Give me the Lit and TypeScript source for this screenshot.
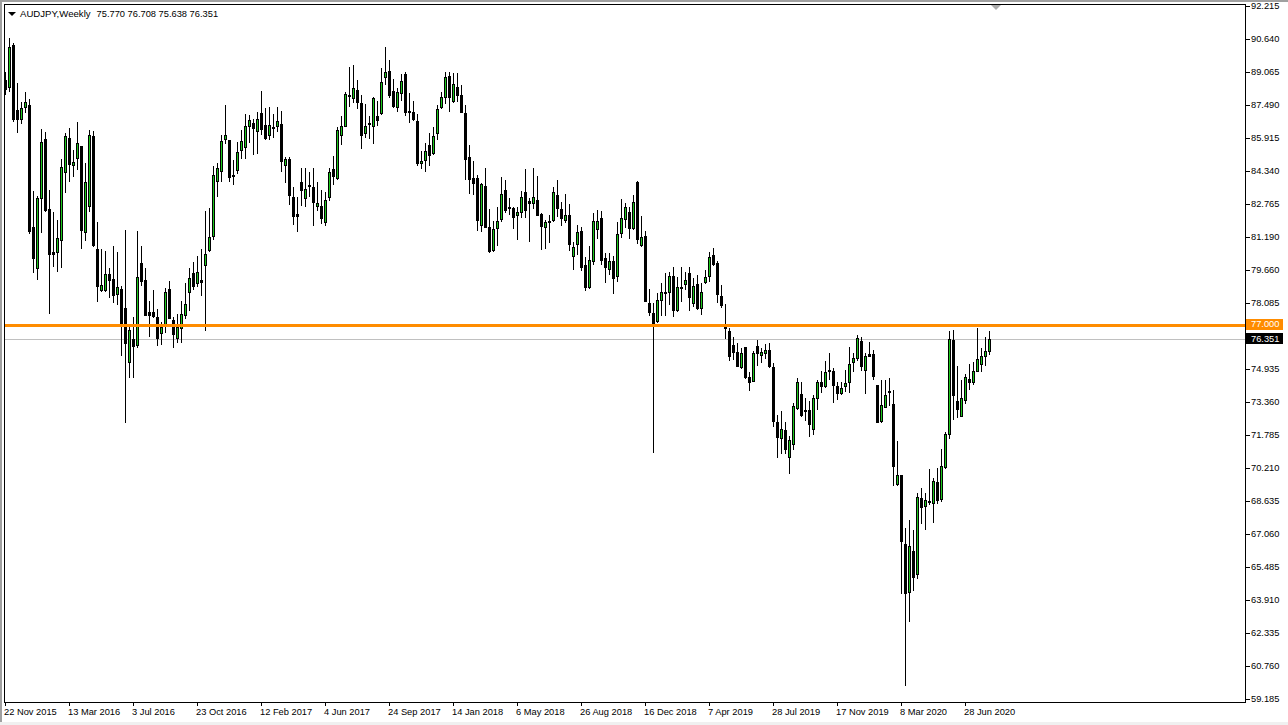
import { LitElement, html, svg, css, type TemplateResult } from 'lit';
import { customElement } from 'lit/decorators.js';

// [high, low, bodyTop, bodyBottom, bull] in chart pixels, one bar every 4px from x=5
type Bar = [number, number, number, number, number];

const BARS: Bar[] = [
  [72, 95, 80, 90, 0], [38, 92, 47, 88, 1], [43, 122, 45, 120, 0], [83, 133, 110, 120, 0],
  [102, 124, 108, 120, 1], [92, 113, 102, 108, 1], [99, 234, 105, 232, 0], [191, 273, 227, 259, 0],
  [196, 280, 198, 269, 1], [129, 233, 142, 199, 1], [132, 212, 139, 211, 0], [190, 314, 209, 255, 0],
  [212, 267, 252, 255, 0], [220, 272, 238, 253, 1], [159, 268, 167, 241, 1], [133, 193, 136, 173, 1],
  [128, 182, 138, 165, 0], [150, 177, 162, 166, 1], [122, 170, 143, 159, 1], [159, 249, 146, 231, 0],
  [163, 241, 182, 233, 1], [130, 212, 135, 207, 1], [131, 247, 136, 246, 0], [222, 302, 249, 287, 0],
  [249, 292, 285, 291, 1], [251, 292, 274, 291, 1], [268, 298, 274, 281, 0], [246, 303, 279, 296, 0],
  [252, 305, 287, 295, 1], [286, 356, 289, 327, 0], [230, 423, 308, 344, 0], [327, 378, 330, 363, 1],
  [317, 378, 339, 347, 0], [231, 348, 277, 346, 1], [246, 286, 263, 282, 0], [268, 316, 280, 316, 0],
  [301, 337, 312, 316, 0], [290, 318, 312, 317, 0], [309, 346, 317, 339, 0], [322, 345, 327, 334, 1],
  [288, 333, 292, 325, 1], [281, 319, 289, 319, 0], [317, 348, 320, 335, 0], [314, 343, 327, 339, 1],
  [301, 343, 314, 329, 1], [283, 319, 304, 316, 1], [268, 311, 278, 293, 1], [262, 290, 273, 287, 0],
  [256, 287, 272, 284, 1], [249, 296, 280, 283, 0], [211, 331, 254, 266, 1], [208, 252, 237, 251, 1],
  [166, 240, 175, 237, 1], [163, 197, 168, 182, 1], [135, 182, 141, 172, 1], [105, 144, 135, 140, 1],
  [140, 182, 140, 178, 0], [160, 185, 175, 177, 0], [142, 174, 152, 171, 1], [130, 159, 141, 151, 1],
  [114, 159, 126, 148, 1], [115, 143, 120, 127, 1], [119, 155, 123, 129, 0], [112, 154, 119, 132, 1],
  [91, 135, 113, 130, 0], [108, 140, 125, 139, 0], [107, 140, 125, 136, 1], [114, 138, 127, 129, 0],
  [107, 132, 121, 127, 1], [111, 172, 124, 162, 0], [157, 183, 159, 166, 1], [157, 205, 159, 196, 0],
  [187, 225, 197, 217, 0], [197, 232, 214, 217, 0], [168, 206, 182, 191, 0], [168, 207, 189, 199, 1],
  [172, 197, 185, 187, 0], [168, 226, 187, 203, 0], [182, 211, 203, 207, 1], [190, 224, 206, 219, 0],
  [192, 226, 200, 223, 1], [168, 201, 172, 198, 1], [156, 185, 169, 177, 0], [127, 180, 130, 179, 1],
  [116, 145, 126, 136, 1], [92, 127, 94, 127, 1], [67, 107, 95, 97, 0], [65, 103, 88, 99, 1],
  [80, 109, 90, 103, 0], [95, 149, 103, 136, 0], [104, 138, 126, 134, 1], [116, 139, 123, 124, 0],
  [97, 144, 98, 127, 1], [101, 126, 116, 121, 0], [68, 115, 82, 114, 1], [47, 85, 72, 78, 1],
  [60, 98, 71, 96, 0], [79, 108, 91, 107, 0], [88, 112, 92, 108, 1], [74, 101, 81, 94, 1],
  [72, 116, 74, 113, 0], [93, 123, 111, 112, 0], [101, 121, 112, 120, 0], [114, 166, 121, 164, 0],
  [151, 169, 161, 164, 1], [143, 172, 151, 161, 1], [133, 166, 145, 156, 0], [127, 155, 136, 154, 1],
  [105, 140, 109, 134, 1], [92, 109, 97, 108, 1], [72, 104, 77, 98, 1], [72, 112, 76, 98, 0],
  [73, 103, 84, 102, 1], [73, 102, 87, 96, 0], [85, 113, 95, 113, 0], [105, 180, 113, 160, 0],
  [145, 194, 157, 180, 0], [161, 195, 178, 184, 0], [175, 231, 178, 221, 0], [183, 232, 184, 226, 1],
  [168, 228, 186, 228, 0], [209, 253, 227, 252, 0], [221, 252, 229, 251, 1], [207, 246, 221, 229, 1],
  [177, 222, 194, 220, 1], [180, 213, 190, 211, 0], [198, 215, 207, 209, 0], [207, 229, 208, 218, 0],
  [207, 240, 212, 216, 1], [191, 218, 197, 213, 1], [169, 218, 192, 211, 0], [198, 242, 201, 204, 0],
  [168, 209, 197, 204, 1], [176, 216, 200, 216, 0], [213, 250, 214, 227, 0], [220, 249, 222, 228, 1],
  [215, 243, 221, 223, 0], [187, 222, 192, 221, 1], [180, 217, 195, 209, 0], [202, 226, 209, 219, 0],
  [194, 223, 215, 221, 1], [204, 251, 215, 245, 0], [242, 270, 247, 257, 1], [225, 255, 232, 245, 1],
  [227, 271, 231, 268, 0], [257, 291, 265, 288, 0], [246, 289, 260, 288, 1], [213, 265, 221, 262, 1],
  [210, 239, 221, 230, 1], [211, 265, 218, 261, 0], [253, 283, 258, 268, 0], [253, 275, 261, 270, 1],
  [256, 294, 261, 279, 0], [222, 282, 234, 277, 1], [199, 238, 218, 234, 1], [203, 228, 207, 220, 1],
  [207, 239, 212, 229, 0], [195, 230, 202, 229, 1], [181, 244, 182, 240, 0], [216, 247, 237, 246, 1],
  [231, 302, 236, 302, 0], [289, 316, 303, 313, 0], [303, 453, 313, 324, 0], [293, 323, 300, 322, 1],
  [283, 316, 292, 301, 1], [273, 316, 292, 293, 0], [272, 305, 276, 293, 1], [267, 317, 276, 311, 0],
  [277, 312, 287, 311, 1], [267, 302, 287, 289, 0], [272, 290, 280, 285, 1], [267, 311, 273, 298, 0],
  [278, 307, 286, 304, 1], [275, 310, 284, 309, 0], [283, 315, 292, 309, 1], [270, 284, 277, 283, 1],
  [252, 282, 257, 277, 1], [248, 266, 255, 265, 0], [261, 303, 263, 295, 0], [285, 308, 296, 306, 0],
  [304, 339, 327, 329, 0], [328, 361, 331, 357, 0], [337, 360, 345, 353, 0], [343, 367, 352, 367, 0],
  [348, 369, 353, 368, 1], [347, 379, 347, 378, 0], [372, 391, 377, 383, 0], [351, 382, 353, 382, 1],
  [340, 366, 346, 354, 0], [348, 363, 352, 356, 1], [344, 359, 350, 354, 1], [343, 368, 350, 367, 0],
  [363, 427, 367, 422, 0], [415, 458, 422, 438, 0], [411, 454, 429, 439, 1], [422, 454, 430, 450, 0],
  [436, 474, 440, 458, 1], [403, 450, 406, 445, 1], [378, 410, 382, 409, 1], [382, 417, 394, 416, 0],
  [398, 421, 410, 412, 0], [401, 437, 410, 425, 0], [395, 435, 398, 430, 1], [380, 410, 382, 399, 1],
  [371, 393, 382, 387, 0], [361, 388, 372, 387, 1], [353, 380, 370, 372, 0], [368, 403, 371, 386, 0],
  [382, 400, 386, 394, 0], [382, 395, 388, 394, 1], [370, 392, 383, 387, 1], [347, 393, 364, 383, 1],
  [353, 372, 358, 363, 1], [335, 361, 338, 359, 1], [337, 371, 341, 367, 0], [353, 394, 356, 371, 1],
  [342, 357, 354, 357, 0], [350, 380, 354, 377, 0], [385, 423, 385, 423, 0], [380, 423, 405, 422, 1],
  [380, 408, 395, 408, 1], [378, 406, 391, 393, 0], [390, 486, 404, 467, 0], [441, 486, 475, 485, 1],
  [475, 594, 475, 542, 0], [528, 686, 544, 594, 0], [520, 622, 546, 593, 1], [530, 591, 551, 578, 0],
  [493, 579, 497, 575, 1], [488, 524, 498, 508, 0], [493, 530, 500, 507, 1], [469, 505, 501, 503, 0],
  [478, 523, 481, 504, 1], [468, 504, 482, 501, 0], [449, 502, 466, 500, 1], [432, 469, 434, 468, 1],
  [331, 439, 339, 435, 1], [330, 420, 340, 396, 0], [366, 418, 401, 410, 0], [380, 417, 398, 417, 1],
  [374, 404, 377, 401, 1], [364, 390, 379, 383, 0], [362, 385, 371, 383, 1], [328, 372, 359, 372, 1],
  [348, 372, 356, 365, 1], [337, 366, 351, 357, 1], [331, 355, 339, 352, 1],
];

const PRICES = [
  '92.215', '90.640', '89.065', '87.490', '85.915', '84.340', '82.765', '81.190',
  '79.660', '78.085', '76.510', '74.935', '73.360', '71.785', '70.210', '68.635',
  '67.060', '65.485', '63.910', '62.335', '60.760', '59.185',
];

const DATES = [
  '22 Nov 2015', '13 Mar 2016', '3 Jul 2016', '23 Oct 2016', '12 Feb 2017', '4 Jun 2017',
  '24 Sep 2017', '14 Jan 2018', '6 May 2018', '26 Aug 2018', '16 Dec 2018', '7 Apr 2019',
  '28 Jul 2019', '17 Nov 2019', '8 Mar 2020', '28 Jun 2020',
];

@customElement('app-root')
export class AppRoot extends LitElement {
  static styles = css`
    :host {
      display: block;
      width: 1288px;
      height: 725px;
      overflow: hidden;
      background: #ffffff;
      color: #000000;
      font-family: 'Liberation Sans', Arial, sans-serif;
      font-size: 9.3px;
    }

    .window {
      display: flex;
      height: 722px;
      box-sizing: border-box;
      border-top: 2px solid #a0a0a0;
      border-left: 2px solid #a0a0a0;
    }

    .footer {
      height: 3px;
      background: #f0f0f0;
    }

    .left {
      padding: 2px 0 0 2px;
    }

    .plot {
      position: relative;
      width: 1240px;
      height: 697px;
      border: 1px solid #000000;
    }

    .plot svg {
      display: block;
    }

    .legend {
      position: absolute;
      left: 3px;
      top: 2px;
      display: flex;
      align-items: center;
      height: 13px;
      white-space: nowrap;
    }

    .legend svg {
      margin-right: 4px;
    }

    .symbol {
      font-size: 9.6px;
      margin-right: 6px;
    }

    .times {
      display: grid;
      grid-template-columns: repeat(16, 64px);
      padding-left: 1px;
    }

    .time {
      white-space: nowrap;
    }

    .time::before {
      content: '';
      display: block;
      width: 1px;
      height: 3px;
      background: #000000;
    }

    .time span {
      display: block;
      margin-left: -1px;
      line-height: 12px;
    }

    .prices {
      position: relative;
      margin-top: -2px;
      width: 41px;
    }

    .price {
      display: flex;
      align-items: flex-start;
      height: 33px;
      line-height: 13px;
    }

    .price::before {
      content: '';
      width: 4px;
      height: 1px;
      margin: 6px 1px 0 0;
      background: #000000;
    }

    .tag {
      position: absolute;
      left: 0;
      width: 37px;
      height: 11px;
      padding-left: 5px;
      box-sizing: border-box;
      line-height: 11px;
      color: #ffffff;
    }

    .tag.level {
      top: 319px;
      background: #ff8c00;
    }

    .tag.bid {
      top: 333px;
      line-height: 13px;
      background: #000000;
    }
  `;

  private _renderBar(bar: Bar, i: number) {
    const [high, low, top, bottom, bull] = bar;
    const x = 5 + 4 * i;
    const h = Math.max(bottom - top, 2);
    return svg`
      <rect x=${x} y=${high} width="1" height=${low - high} fill="#000" />
      <rect x=${x - 1} y=${top} width="3" height=${h} fill="#000" />
      ${bull && h > 2
        ? svg`<rect x=${x} y=${top + 1} width="1" height=${h - 2} fill="#1cc81c" />`
        : ''}
    `;
  }

  private _renderChart(): TemplateResult {
    return html`
      <svg
        width="1240"
        height="697"
        viewBox="5 5 1240 697"
        shape-rendering="crispEdges"
      >
        <rect x="5" y="339" width="1240" height="1" fill="#c0c0c0" />
        ${BARS.map((bar, i) => this._renderBar(bar, i))}
        <rect x="5" y="324" width="1240" height="3" fill="#ff8c00" />
        <polygon points="991,5 1001,5 996,10" fill="#ababab" shape-rendering="auto" />
      </svg>
    `;
  }

  render(): TemplateResult {
    return html`
      <div class="window">
        <div class="left">
          <div class="plot">
            ${this._renderChart()}
            <div class="legend">
              <svg width="8" height="4" viewBox="0 0 8 4">
                <polygon points="0,0 8,0 4,4" fill="#000" />
              </svg>
              <span class="symbol">AUDJPY,Weekly</span>
              <span>75.770 76.708 75.638 76.351</span>
            </div>
          </div>
          <div class="times">
            ${DATES.map((d) => html`<div class="time"><span>${d}</span></div>`)}
          </div>
        </div>
        <div class="prices">
          ${PRICES.map((p) => html`<div class="price">${p}</div>`)}
          <div class="tag level">77.000</div>
          <div class="tag bid">76.351</div>
        </div>
      </div>
      <div class="footer"></div>
    `;
  }
}

declare global {
  interface HTMLElementTagNameMap {
    'app-root': AppRoot;
  }
}
